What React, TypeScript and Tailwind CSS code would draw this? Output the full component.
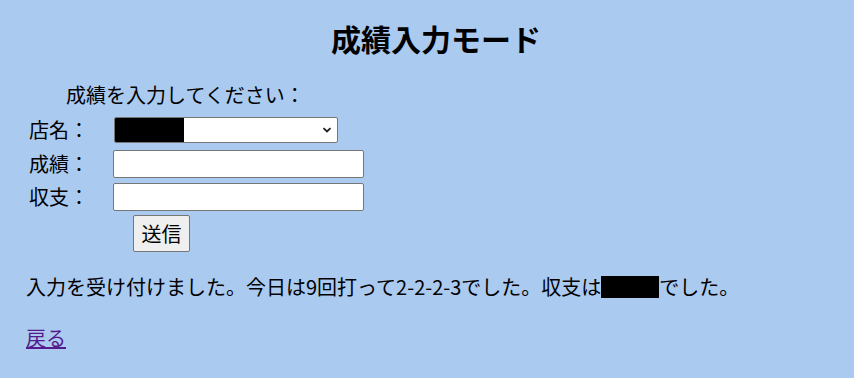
export default function App() {
  const fields = [
    { label: '成績：' },
    { label: '収支：' },
  ];

  return (
    <div
      className="h-[378px] w-full overflow-hidden bg-[#abcaf0] text-black"
      style={{ fontFamily: '"Noto Sans CJK JP", "Noto Sans", sans-serif' }}
    >
      <h1 className="mt-[23px] pl-[18px] text-center text-[30px] font-bold leading-[30px]">
        成績入力モード
      </h1>

      <div className="pl-[26px]">
        <p className="mt-[30px] pl-[40px] text-[20px] leading-[24px]">成績を入力してください：</p>

        <div className="mt-[10px] grid grid-cols-[84px_auto] items-center pl-[3px] text-[20px]">
          <span className="leading-[24px]">店名：</span>
          <div className="ml-px flex h-[26px] w-[224px] items-center overflow-hidden rounded-[2px] border border-[#767676] bg-white">
            <div className="h-full w-[69px] bg-black" />
            <div className="flex-1" />
            <svg width="10" height="6" viewBox="0 0 10 6" className="mr-[5px]">
              <path d="M1.5 1.2 L5 4.5 L8.5 1.2" fill="none" stroke="#222" strokeWidth="1.8" />
            </svg>
          </div>

          {fields.map((f, i) => (
            <div key={f.label} className="contents">
              <span className={i === 0 ? 'mt-[7px] leading-[24px]' : 'mt-[5px] leading-[24px]'}>
                {f.label}
              </span>
              <input
                type="text"
                className={
                  (i === 0 ? 'mt-[7px] ' : 'mt-[5px] ') +
                  'h-[28px] w-[251px] rounded-[2px] border border-[#767676] bg-white px-1 outline-none'
                }
              />
            </div>
          ))}

          <span />
          <button className="mt-[4px] ml-[20px] h-[37px] w-[57px] rounded-[2px] border border-[#767676] bg-[#efefef] text-[20px] leading-[24px]">
            送信
          </button>
        </div>

        <p className="mt-[23px] flex items-center text-[20px] leading-[24px]">
          入力を受け付けました。今日は9回打って2-2-2-3でした。収支は
          <span className="inline-block h-[22px] w-[58px] bg-black" />
          でした。
        </p>

        <a href="#" className="mt-[27px] inline-block text-[20px] leading-[24px] text-[#551a8b] underline">
          戻る
        </a>
      </div>
    </div>
  );
}
